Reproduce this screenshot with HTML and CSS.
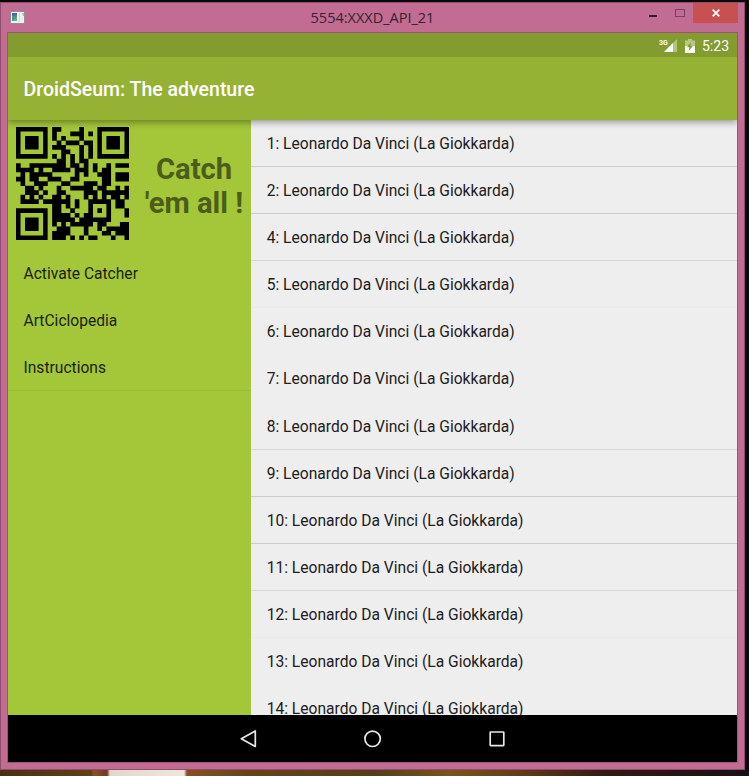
FILE: index.html
```html
<!DOCTYPE html>
<html lang="en">
<head>
<meta charset="utf-8">
<title>5554:XXXD_API_21</title>
<link rel="stylesheet" href="styles.css">
</head>
<body>
<div class="window">
  <header class="titlebar">
    <svg class="app-icon" width="16" height="14" viewBox="0 0 16 14"><rect x=".5" y=".5" width="14" height="12" fill="#eef0ea" stroke="#9c8996"/><rect x="2" y="2" width="5" height="8" fill="#4c9690"/><path d="M2 5V2h5v2z" fill="#496a9b"/><path d="M3 10l4-4v4z" fill="#65b78b"/><path d="M9 2h1v9H9z" fill="#d6d9d6"/><path d="M12 2h2v3h-1z" fill="#8bcbb9"/></svg>
    <h1 class="window-title">5554:XXXD_API_21</h1>
    <svg class="minimize" width="8" height="3"><rect width="8" height="2" fill="#2a2229"/></svg>
    <svg class="maximize" width="10" height="8"><rect x=".5" y=".5" width="9" height="7" fill="none" stroke="#76455d"/></svg>
    <div class="close"><svg width="8" height="8" viewBox="0 0 8 8"><path d="M.7.7l6.6 6.6M7.3.7L.7 7.3" stroke="#fff" stroke-width="1.7"/></svg></div>
  </header>
  <main class="screen">
    <div class="statusbar">
      <svg width="18" height="14" viewBox="0 0 18 14"><path d="M18 0v13H5z" fill="#b3c47c"/><path d="M14 4v9H5z" fill="#fff"/><text x="0" y="6" class="network">3G</text></svg>
      <svg class="battery" width="10" height="14" viewBox="0 0 10 14"><path d="M3 0h4v1.5h3V14H0V1.5h3z" fill="#b8c784"/><path d="M0 7h10v7H0z" fill="#fff"/><path d="M5.8 3L2 8.3h2.4L3.8 12 8 6.8H5.3z" fill="#829b30"/></svg>
      <span>5:23</span>
    </div>
    <div class="appbar">DroidSeum: The adventure</div>
    <div class="panes">
      <aside class="sidebar">
        <div class="hero">
          <svg id="qr" class="qr" viewBox="0 0 25 25"></svg>
          <div class="slogan">Catch<br>'em all !</div>
        </div>
        <nav class="menu"><div>Activate Catcher</div><div>ArtCiclopedia</div><div>Instructions</div></nav>
      </aside>
      <section class="list">
        <div class="row strong">1: Leonardo Da Vinci (La Giokkarda)</div>
        <div class="row strong">2: Leonardo Da Vinci (La Giokkarda)</div>
        <div class="row medium">4: Leonardo Da Vinci (La Giokkarda)</div>
        <div class="row faint">5: Leonardo Da Vinci (La Giokkarda)</div>
        <div class="row">6: Leonardo Da Vinci (La Giokkarda)</div>
        <div class="row">7: Leonardo Da Vinci (La Giokkarda)</div>
        <div class="row medium">8: Leonardo Da Vinci (La Giokkarda)</div>
        <div class="row strong">9: Leonardo Da Vinci (La Giokkarda)</div>
        <div class="row strong">10: Leonardo Da Vinci (La Giokkarda)</div>
        <div class="row medium">11: Leonardo Da Vinci (La Giokkarda)</div>
        <div class="row faint">12: Leonardo Da Vinci (La Giokkarda)</div>
        <div class="row">13: Leonardo Da Vinci (La Giokkarda)</div>
        <div class="row">14: Leonardo Da Vinci (La Giokkarda)</div>
      </section>
    </div>
    <div class="navbar">
      <svg width="18" height="20" viewBox="0 0 18 20"><path d="M15.3 2v15.5L1.3 9.75z"/></svg>
      <svg width="18" height="20" viewBox="0 0 18 20"><circle cx="8.6" cy="9.8" r="7.7"/></svg>
      <svg width="18" height="20" viewBox="0 0 18 20"><rect x="2.2" y="3" width="13.6" height="13.6" rx=".5"/></svg>
    </div>
  </main>
</div>
<div class="desktop"></div>
<script src="qr.js"></script>
</body>
</html>
```
FILE: styles.css
```css
* { box-sizing: border-box; }
body { margin: 0; height: 776px; padding-top: 2px; overflow: hidden; background: #0b0809; font-family: Roboto, sans-serif; }
.window { width: 745px; height: 768px; padding: 0 7px 7px; border: 1px solid #8f4e70; background: #c26c93; }
.titlebar { height: 30px; display: flex; align-items: flex-start; margin-right: -7px; }
.app-icon { margin: 8px 0 0 2px; }
.window-title { flex: 1; margin: 5px 0 0 70px; text-align: center; font: 400 14.5px/20px "Open Sans", sans-serif; letter-spacing: 0; color: #33242d; }
.minimize { margin: 12px 18px 0 0; }
.maximize { margin: 6px 8px 0 0; }
.close { width: 45px; height: 20px; margin-right: 6px; background: #c75050; display: flex; align-items: center; justify-content: center; }
.screen { width: 729px; height: 729px; outline: 1px solid #a0527a; display: flex; flex-direction: column; background: #000; }
.statusbar { height: 24px; background: #839c30; color: #fff; display: flex; align-items: center; justify-content: flex-end; padding: 1px 8px 0 0; font-size: 14px; }
.network { font: 700 7px Roboto, sans-serif; fill: #fff; }
.battery { margin: 0 7px 0 8px; }
.appbar { height: 62.5px; position: relative; z-index: 1; background: #96b235; color: #fff; font-size: 19.5px; font-weight: 500; line-height: 65px; padding-left: 15.5px; box-shadow: 0 2px 7px rgba(0,0,0,.4); clip-path: inset(0 0 -12px 0); }
.panes { height: 595.5px; padding-top: .5px; display: flex; overflow: hidden; background: #a4c639; }
.sidebar { width: 243px; background: #a4c639; }
.hero { height: 129.5px; display: flex; padding: 7px 4px 0 8px; }
.qr { width: 113px; height: 113px; flex: none; }
.slogan { flex: 1; margin-left: 12px; padding-top: 25px; color: #4c5c1b; font-size: 29.2px; line-height: 34px; font-weight: 700; text-align: center; white-space: nowrap; }
.menu { height: 141.4px; font-size: 15.6px; color: #1a1f0b; border-bottom: 1px solid #9bbb37; }
.menu div { height: 47.1px; line-height: 49.4px; padding-left: 15.5px; }
.list { flex: 1; background: #eee; color: #202020; font-size: 15.6px; }
.row { height: 47.1px; padding-left: 15.7px; line-height: 49.2px; border-bottom: 1px solid transparent; white-space: nowrap; }
.strong { border-color: #ccc; }
.medium { border-color: #d7d7d7; }
.faint { border-color: #e8e8e8; }
.navbar { height: 47px; display: flex; justify-content: center; align-items: center; gap: 106px; background: #000; }
.navbar svg { fill: none; stroke: #e7e7e7; stroke-width: 1.7; stroke-linejoin: round; }
.desktop { height: 6px; background: linear-gradient(90deg, #4b3016 0, #604019 91px, #8f4c28 94px, #6a3a28 107px, #e3d6cc 110px, #eee6dc 184px, #8c4b25 187px, #795022 205px, #65421b 250px, #553d1d 375px, #7a541b 450px, #5d3819 530px, #341b15 600px, #241312 700px, #151113 749px); }
```
FILE: qr.js
```js
// Dark modules of each row; the three corner finder patterns are added below.
const rows = [
  [8,9,14], [8,12,13,14,16], [8,10,14], [9,11,12,13,15,16], [8,9,10,14,16], [10,11,14,16],
  [8,10,12,14,16], [9,10,12,14,15], [0,3,4,5,6,7,8,9,10,12,13,15,17,20,22,23,24],
  [0,1,2,3,5,8,9,10,11,13,14,15,17,19,20], [1,3,4,5,6,7,13,15,18,19,20,22,23,24],
  [0,1,3,4,7,8,9,12,13,19,20,22,23,24], [1,4,5,6,10,11,15,16,17,19,20],
  [2,3,5,9,12,13,14,15,16,18,19,22,24], [2,3,4,6,9,10,15,16,17,19,20,21,22,23,24],
  [1,3,5,8,9,11,15,17,19,21,22,24], [1,2,3,4,6,7,8,9,10,11,13,16,17,18,19,20,22,23],
  [8,9,11,13,16,20,22,23], [8,9,12,16,18,20,24], [8,9,10,11,13,15,16,20,24],
  [8,9,10,11,12,14,15,16,17,18,19,20], [8,10,12,13,14,15,16,18,19,23,24],
  [9,10,11,15,18,20,21,22,23,24], [8,9,10,11,15,19,20,22,23,24], [8,9,10,12,14,16,17,21,24]
];
let d = "";
rows.forEach((row, y) => row.forEach(x => { d += `M${x} ${y}h1.03v1.03h-1.03z`; }));
for (const [x, y] of [[0, 0], [18, 0], [0, 18]]) {
  d += `M${x} ${y}h7v1h-7zM${x} ${y + 6}h7v1h-7zM${x} ${y + 1}h1v5h-1zM${x + 6} ${y + 1}h1v5h-1zM${x + 2} ${y + 2}h3v3h-3z`;
}
document.getElementById("qr").innerHTML = `<path d="${d}"/>`;
```
